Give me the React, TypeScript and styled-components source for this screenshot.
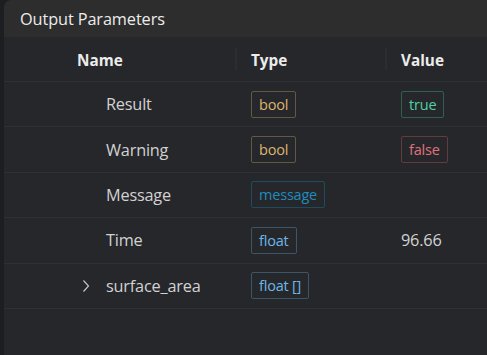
import React from 'react';
import styled, { createGlobalStyle } from 'styled-components';

type TBadgeKind = 'bool' | 'true' | 'false' | 'message' | 'float';

type TParam = {
  name: string;
  type: string;
  typeKind: TBadgeKind;
  value?: string;
  valueKind?: TBadgeKind;
  expandable?: boolean;
};

const badgeColors: Record<TBadgeKind, { fg: string; border: string }> = {
  bool: { fg: '#dcb56e', border: '#625843' },
  true: { fg: '#4fd1a5', border: '#2f5f50' },
  false: { fg: '#e0727a', border: '#633a3e' },
  message: { fg: '#1f8cbc', border: '#1e4b5e' },
  float: { fg: '#6bb9e8', border: '#3a5668' }
};

const params: TParam[] = [
  { name: 'Result', type: 'bool', typeKind: 'bool', value: 'true', valueKind: 'true' },
  { name: 'Warning', type: 'bool', typeKind: 'bool', value: 'false', valueKind: 'false' },
  { name: 'Message', type: 'message', typeKind: 'message' },
  { name: 'Time', type: 'float', typeKind: 'float', value: '96.66' },
  { name: 'surface_area', type: 'float []', typeKind: 'float', expandable: true }
];

const GlobalStyle = createGlobalStyle`
  html, body {
    margin: 0;
    padding: 0;
    background: #1d1e21;
  }
  body {
    font-family: 'Open Sans', 'Noto Sans', sans-serif;
    -webkit-font-smoothing: antialiased;
  }
`;

const Page = styled.div`
  display: flex;
  width: 487px;
  height: 355px;
  overflow: hidden;
  background: #1d1e21;
`;

const Panel = styled.section`
  flex: 1;
  margin-left: 4px;
  display: flex;
  flex-direction: column;
  background: #26272b;
  border-top-left-radius: 8px;
  overflow: hidden;
`;

const Header = styled.header`
  height: 37px;
  display: flex;
  align-items: center;
  padding-left: 16px;
  padding-top: 1px;
  box-sizing: border-box;
  background: #2d2d2e;
  color: #ececec;
  font-size: 16.3px;
  letter-spacing: -0.1px;
`;

const Table = styled.div`
  display: flex;
  flex-direction: column;
`;

const Row = styled.div<{ head?: boolean }>`
  display: grid;
  grid-template-columns: 57px 174px 150px 1fr;
  align-items: center;
  height: ${p => (p.head ? '43px' : '44.4px')};
  padding-top: ${p => (p.head ? '1px' : '0')};
  border-bottom: 1px solid #2f3034;
`;

const HeadCell = styled.div<{ divider?: boolean }>`
  position: relative;
  padding-left: 16px;
  color: #ececec;
  font-size: 15.3px;
  font-weight: 700;
  ${p =>
    p.divider &&
    `
    &::before {
      content: '';
      position: absolute;
      left: 0;
      top: 50%;
      height: 22px;
      margin-top: -12px;
      width: 2px;
      background: #2c2d31;
    }
  `}
`;

const NameCell = styled.div`
  position: relative;
  padding-left: 45px;
  color: #d2d2d2;
  font-size: 16.3px;
  letter-spacing: -0.2px;
`;

const Chevron = styled.svg`
  position: absolute;
  left: 21px;
  top: 50%;
  transform: translateY(-50%);
`;

const Cell = styled.div`
  padding-left: 16px;
  color: #d2d2d2;
  font-size: 16.3px;
  letter-spacing: -0.2px;
`;

const Badge = styled.span<{ kind: TBadgeKind }>`
  display: inline-flex;
  align-items: center;
  height: 25px;
  padding: 0 7px;
  border: 1px solid ${p => badgeColors[p.kind].border};
  border-radius: 2px;
  color: ${p => badgeColors[p.kind].fg};
  font-size: 14.5px;
  letter-spacing: -0.2px;
`;

function ParamRow({ name, type, typeKind, value, valueKind, expandable }: TParam) {
  return (
    <Row>
      <div />
      <NameCell>
        {expandable && (
          <Chevron width='8' height='14' viewBox='0 0 8 14'>
            <path d='M1.5 1.5 L6.5 7 L1.5 12.5' fill='none' stroke='#c4c4c4' strokeWidth='1.2' />
          </Chevron>
        )}
        {name}
      </NameCell>
      <Cell>
        <Badge kind={typeKind}>{type}</Badge>
      </Cell>
      <Cell>{value && (valueKind ? <Badge kind={valueKind}>{value}</Badge> : value)}</Cell>
    </Row>
  );
}

function App() {
  return (
    <Page>
      <GlobalStyle />
      <Panel>
        <Header>Output Parameters</Header>
        <Table>
          <Row head>
            <div />
            <HeadCell>Name</HeadCell>
            <HeadCell divider>Type</HeadCell>
            <HeadCell divider>Value</HeadCell>
          </Row>
          {params.map(p => (
            <ParamRow key={p.name} {...p} />
          ))}
        </Table>
      </Panel>
    </Page>
  );
}

export default App;
